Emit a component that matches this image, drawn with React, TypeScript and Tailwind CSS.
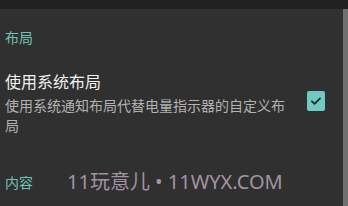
export default function App() {
  return (
    <div
      className="w-[348px] h-[206px] overflow-hidden bg-[#303030] flex flex-col"
      style={{ fontFamily: '"Noto Sans CJK SC", "Noto Sans", sans-serif' }}
    >
      {/* top toolbar strip */}
      <div className="h-[9px] bg-[#212121] shrink-0" />
      <div className="flex flex-1 min-h-0">
        <div className="flex-1 flex flex-col">
          <div className="pl-[5px] pt-[18px] text-[14px] leading-[20px] text-[#6fc3b6]">布局</div>
          <div className="flex items-start pl-[5px] pr-[18px] mt-[23px]">
            <div className="flex-1 min-w-0 flex flex-col">
              <div className="text-[16px] leading-[22px] text-[#f0f0f0]">使用系统布局</div>
              <div className="text-[14px] leading-[20px] text-[#b3b3b3] mt-[3px]">
                使用系统通知布局代替电量指示器的自定义布
                <br />局
              </div>
            </div>
            <div className="w-[18px] h-[20px] shrink-0 rounded-[2px] bg-[#6fcbc0] flex items-center justify-center mt-[21px]">
              <svg width="14" height="14" viewBox="0 0 24 24" fill="none">
                <path d="M5 12.5l4.5 4.5L19 7.5" stroke="#262626" strokeWidth="3" strokeLinecap="round" strokeLinejoin="round" />
              </svg>
            </div>
          </div>
          <div className="flex items-center h-[24px] mt-[35px] pl-[5px]">
            <div className="text-[14px] leading-[20px] text-[#6fc3b6]">内容</div>
            <div
              className="ml-[34px] text-[20px] leading-[24px] text-[#a393a3]"
              style={{ fontFamily: '"Noto Sans", "Noto Sans CJK SC", sans-serif' }}
            >
              11玩意儿 • 11WYX.COM
            </div>
          </div>
        </div>
        <div className="w-[5px] bg-[#707070] shrink-0" />
      </div>
    </div>
  );
}
